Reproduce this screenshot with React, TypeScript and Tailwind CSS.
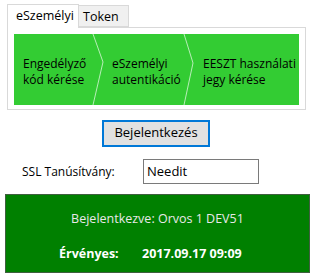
import React from 'react'

const font = { fontFamily: '"Open Sans", "Noto Sans", sans-serif' }

function StepArrows() {
  // chevron separators drawn over the green step bar
  return (
    <svg className="pointer-events-none absolute inset-0" width="286" height="71" viewBox="0 0 286 71">
      <polyline points="79,0 89,28 79,71" fill="none" stroke="rgba(255,255,255,0.65)" strokeWidth="1" />
      <polyline points="170,0 179,29 170,71" fill="none" stroke="rgba(255,255,255,0.65)" strokeWidth="1" />
    </svg>
  )
}

export default function App() {
  return (
    <div className="relative h-[279px] w-[318px] overflow-hidden bg-white text-[12px] text-black" style={font}>
      {/* tabs */}
      <div className="flex items-end pl-[7px] pt-[4px]">
        <div className="relative z-10 -mb-px flex h-[24px] w-[72px] items-start border border-b-0 border-[#d9d9d9] bg-white pl-[8px] pt-[2px] text-[12.5px]">
          eSzemélyi
        </div>
        <div className="flex h-[22px] w-[50px] items-start border border-l-0 border-[#d9d9d9] bg-[#f0f0f0] pl-[4px] pt-[2px] text-[12.5px]">
          Token
        </div>
      </div>

      {/* tab panel */}
      <div className="ml-[7px] h-[83px] w-[299px] border border-[#d9d9d9] bg-white p-[6px]">
        <div className="relative flex h-[71px] bg-[#33cc33] leading-[16px]">
          <div className="flex w-[79px] items-center pl-[9px] pt-[5px]">
            <span>
              Engedélyző
              <br />
              kód kérése
            </span>
          </div>
          <div className="flex w-[91px] items-center pl-[19px] pt-[5px]">
            <span>
              eSzemélyi
              <br />
              autentikáció
            </span>
          </div>
          <div className="flex flex-1 items-center pl-[19px] pt-[5px]">
            <span>
              EESZT használati
              <br />
              jegy kérése
            </span>
          </div>
          <StepArrows />
        </div>
      </div>

      {/* login button */}
      <button className="ml-[102px] mt-[10px] flex h-[27px] w-[108px] items-center justify-center border-2 border-[#0078d7] bg-[#e1e1e1] pb-px text-[13px]">
        Bejelentkezés
      </button>

      {/* certificate */}
      <div className="mt-[12px] flex h-[25px] items-center">
        <span className="w-[143px] pl-[22px]">SSL Tanúsítvány:</span>
        <div className="flex h-[25px] w-[116px] items-center border border-[#7a7a7a] bg-white pl-[3px] text-[13px]">
          Needit
        </div>
      </div>

      {/* status banner */}
      <div className="ml-[5px] mt-[10px] flex h-[79px] w-[305px] flex-col border border-[#3f5f3f] bg-[#008000] text-[12.5px] text-white">
        <div className="mt-[15px] text-center text-[#e8e8e8]">Bejelentkezve: Orvos 1 DEV51</div>
        <div className="mt-[16px] flex font-bold">
          <span className="ml-[53px] w-[83px]">Érvényes:</span>
          <span>2017.09.17 09:09</span>
        </div>
      </div>
    </div>
  )
}
